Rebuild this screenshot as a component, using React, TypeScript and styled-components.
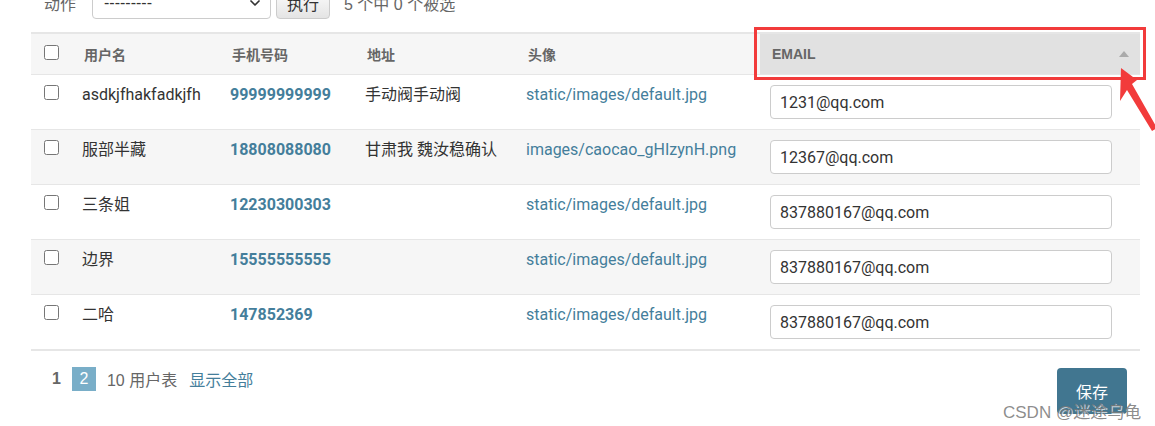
import React from "react";
import styled, { createGlobalStyle } from "styled-components";
import { ChevronDown } from "lucide-react";

const GlobalStyle = createGlobalStyle`
  html, body { margin: 0; padding: 0; background: #fff; }
  body {
    font-family: Roboto, "Noto Sans CJK SC", sans-serif;
    color: #333;
    overflow: hidden;
  }
  * { box-sizing: border-box; }
`;

const Page = styled.div`
  position: relative;
  width: 1155px;
  height: 426px;
  padding-left: 31px;
  overflow: hidden;
`;

const ActionBar = styled.div`
  display: flex;
  align-items: center;
  height: 32px;
  margin-top: -13px;
  padding-left: 13px;
  font-size: 16px;
`;

const Label = styled.span`
  color: #666;
  font-family: "Liberation Sans", "Noto Sans CJK SC", sans-serif;
  margin-right: 16px;
`;

const SelectBox = styled.div`
  display: flex;
  align-items: center;
  justify-content: space-between;
  width: 179px;
  height: 32px;
  padding: 0 7px 0 11px;
  border: 1px solid #ccc;
  border-radius: 4px;
  background: #fff;
  color: #333;
  font-family: "Liberation Sans", sans-serif;
  font-size: 16px;
`;

const RunButton = styled.button`
  width: 54px;
  height: 32px;
  margin-left: 5px;
  border: 1px solid #ccc;
  border-radius: 4px;
  background: linear-gradient(#fff, #e4e4e4);
  color: #333;
  font-family: "Noto Sans CJK SC", sans-serif;
  font-size: 16px;
  padding: 0;
`;

const Counter = styled.span`
  margin-left: 14px;
  color: #666;
  font-family: "Liberation Sans", "Noto Sans CJK SC", sans-serif;
`;

const Table = styled.table`
  margin-top: 13px;
  width: 1109px;
  border-collapse: separate;
  border-spacing: 0;
  table-layout: fixed;
`;

const Th = styled.th<{ $sorted?: boolean; $w: number; $check?: boolean }>`
  width: ${(p) => p.$w}px;
  height: 43px;
  padding: 0 ${(p) => (p.$check ? 0 : 11)}px 0 ${(p) => (p.$check ? 13 : 12)}px;
  text-align: left;
  vertical-align: middle;
  background: ${(p) => (p.$sorted ? "#e1e1e1" : "#f6f6f6")};
  border-top: 2px solid #e6e6e6;
  border-bottom: 1px solid #e6e6e6;
  color: #666;
  font-family: "Liberation Sans", "Noto Sans CJK SC", sans-serif;
  font-size: 14px;
  font-weight: bold;
  text-transform: uppercase;
`;

const HeadInner = styled.div`
  display: flex;
  align-items: center;
  justify-content: space-between;
`;

const SortArrow = styled.span`
  width: 0;
  height: 0;
  border-left: 5px solid transparent;
  border-right: 5px solid transparent;
  border-bottom: 6px solid #aaa;
`;

const Row = styled.tr<{ $alt?: boolean; $last?: boolean }>`
  background: ${(p) => (p.$alt ? "#f6f6f6" : "#fff")};
  & > td {
    border-bottom: ${(p) => (p.$last ? "2px" : "1px")} solid #e6e6e6;
  }
`;

const Td = styled.td<{ $check?: boolean }>`
  padding: 10px 10px 10px ${(p) => (p.$check ? 13 : 10)}px;
  vertical-align: top;
  font-size: 16px;
  line-height: 19px;
  color: #333;
  white-space: nowrap;
`;

const Check = styled.input.attrs({ type: "checkbox" })`
  width: 15px;
  height: 15px;
  margin: 0;
  display: block;
`;

const HeadCheck = styled(Check)`
  margin-top: -3px;
`;

const Phone = styled.a`
  color: #447e9b;
  font-weight: bold;
  text-decoration: none;
`;

const PathLink = styled.span`
  color: #447e9b;
`;

const EmailInput = styled.input`
  display: block;
  width: 342px;
  height: 34px;
  padding: 0 9px;
  border: 1px solid #ccc;
  border-radius: 4px;
  font-family: Roboto, sans-serif;
  font-size: 16px;
  color: #333;
  background: #fff;
`;

const Footer = styled.div`
  width: 1109px;
  display: flex;
  justify-content: space-between;
  align-items: flex-start;
  padding: 16px 13px 0 21px;
`;

const Paginator = styled.div`
  display: flex;
  align-items: center;
  height: 24px;
  font-size: 16px;
  color: #666;
`;

const CurrentPage = styled.span`
  font-weight: bold;
  color: #666;
  font-family: "Liberation Sans", sans-serif;
`;

const PageBox = styled.span`
  display: inline-flex;
  align-items: center;
  justify-content: center;
  width: 24px;
  height: 24px;
  margin-left: 11px;
  background: #79aec8;
  color: #fff;
  font-family: "Liberation Sans", sans-serif;
`;

const Total = styled.span`
  margin-left: 11px;
  font-family: "Liberation Sans", "Noto Sans CJK SC", sans-serif;
`;

const ShowAll = styled.a`
  margin-left: 12px;
  color: #447e9b;
  text-decoration: none;
  font-family: "Noto Sans CJK SC", sans-serif;
`;

const SaveButton = styled.button`
  width: 70px;
  height: 46px;
  margin-top: 1px;
  border: none;
  border-radius: 4px;
  background: #417690;
  color: #fff;
  font-family: "Noto Sans CJK SC", sans-serif;
  font-size: 16px;
  padding: 0;
`;

const Highlight = styled.div`
  position: absolute;
  left: 754px;
  top: 27px;
  width: 392px;
  height: 53px;
  border: 3px solid #f23b3b;
  pointer-events: none;
`;

const ArrowSvg = styled.svg`
  position: absolute;
  left: 0;
  top: 0;
  pointer-events: none;
`;

const Watermark = styled.div`
  position: absolute;
  left: 1003px;
  top: 398px;
  font-family: "Liberation Sans", "Noto Sans CJK SC", sans-serif;
  font-size: 17px;
  color: rgba(120, 120, 120, 0.85);
  text-shadow: 1px 1px 0 rgba(255, 255, 255, 0.7);
  white-space: nowrap;
`;

const rows = [
  { name: "asdkjfhakfadkjfh", phone: "99999999999", addr: "手动阀手动阀", img: "static/images/default.jpg", email: "1231@qq.com" },
  { name: "服部半藏", phone: "18808088080", addr: "甘肃我 魏汝稳确认", img: "images/caocao_gHIzynH.png", email: "12367@qq.com" },
  { name: "三条姐", phone: "12230300303", addr: "", img: "static/images/default.jpg", email: "837880167@qq.com" },
  { name: "边界", phone: "15555555555", addr: "", img: "static/images/default.jpg", email: "837880167@qq.com" },
  { name: "二哈", phone: "147852369", addr: "", img: "static/images/default.jpg", email: "837880167@qq.com" },
];

export default function App() {
  return (
    <>
      <GlobalStyle />
      <Page>
        <ActionBar>
          <Label>动作</Label>
          <SelectBox>
            <span>---------</span>
            <ChevronDown size={16} strokeWidth={2.6} color="#333" />
          </SelectBox>
          <RunButton>执行</RunButton>
          <Counter>5 个中 0 个被选</Counter>
        </ActionBar>

        <Table>
          <thead>
            <tr>
              <Th $w={41} $check>
                <HeadCheck />
              </Th>
              <Th $w={148}>用户名</Th>
              <Th $w={135}>手机号码</Th>
              <Th $w={161}>地址</Th>
              <Th $w={244}>头像</Th>
              <Th $w={380} $sorted>
                <HeadInner>
                  <span>Email</span>
                  <SortArrow />
                </HeadInner>
              </Th>
            </tr>
          </thead>
          <tbody>
            {rows.map((r, i) => (
              <Row key={i} $alt={i % 2 === 1} $last={i === rows.length - 1}>
                <Td $check>
                  <Check />
                </Td>
                <Td>{r.name}</Td>
                <Td>
                  <Phone href="#">{r.phone}</Phone>
                </Td>
                <Td>{r.addr}</Td>
                <Td>
                  <PathLink>{r.img}</PathLink>
                </Td>
                <Td>
                  <EmailInput defaultValue={r.email} />
                </Td>
              </Row>
            ))}
          </tbody>
        </Table>

        <Footer>
          <Paginator>
            <CurrentPage>1</CurrentPage>
            <PageBox>2</PageBox>
            <Total>10 用户表</Total>
            <ShowAll href="#">显示全部</ShowAll>
          </Paginator>
          <SaveButton>保存</SaveButton>
        </Footer>

        <Highlight />
        <ArrowSvg width="1155" height="426" viewBox="0 0 1155 426">
          <polygon
            points="1121,68 1137,80 1132,84 1157,128 1152,131 1127,90 1120,101"
            fill="#f23b3b"
          />
        </ArrowSvg>
        <Watermark>CSDN @迷途乌龟</Watermark>
      </Page>
    </>
  );
}
